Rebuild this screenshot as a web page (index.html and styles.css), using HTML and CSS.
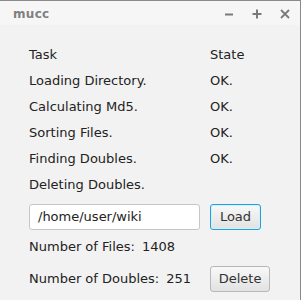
FILE: index.html
```html
<!DOCTYPE html>
<html>
<head>
<meta charset="utf-8">
<link rel="stylesheet" href="styles.css">
</head>
<body>
<div class="window">
  <div class="titlebar">
    <span class="title">mucc</span>
    <div class="controls">
      <svg class="ctl" width="10" height="10" viewBox="0 0 10 10"><path d="M1 5.5H9" stroke="#7a7a7a" stroke-width="2"/></svg>
      <svg class="ctl" width="10" height="10" viewBox="0 0 10 10"><path d="M0.5 5H9.5M5 0.5V9.5" stroke="#7a7a7a" stroke-width="2"/></svg>
      <svg class="ctl" width="10" height="10" viewBox="0 0 10 10"><path d="M1 1L9 9M9 1L1 9" stroke="#7a7a7a" stroke-width="1.8"/></svg>
    </div>
  </div>
  <div class="content">
    <div class="tasks">
      <div>Task</div><div>State</div>
      <div>Loading Directory.</div><div>OK.</div>
      <div>Calculating Md5.</div><div>OK.</div>
      <div>Sorting Files.</div><div>OK.</div>
      <div>Finding Doubles.</div><div>OK.</div>
      <div>Deleting Doubles.</div><div></div>
    </div>
    <div class="pathrow">
      <div class="field">/home/user/wiki</div>
      <div class="btn focused">Load</div>
    </div>
    <div class="inforow">
      <span>Number of Files:</span><span>1408</span>
    </div>
    <div class="inforow last">
      <span>Number of Doubles:</span><span>251</span>
      <div class="btn del">Delete</div>
    </div>
  </div>
</div>
</body>
</html>
```
FILE: styles.css
```css
html, body {
  margin: 0;
  padding: 0;
  background: #f2f2f2;
}
.window {
  width: 301px;
  height: 300px;
  box-sizing: border-box;
  border-top: 1px solid #8a8a8a;
  border-right: 1px solid #8a8a8a;
  background: #f2f2f2;
  font-family: "DejaVu Sans", sans-serif;
  font-size: 13px;
  color: #222;
  overflow: hidden;
}
.titlebar {
  height: 24px;
  background: #f6f6f6;
  display: flex;
  align-items: center;
  justify-content: space-between;
  padding: 0 10px 0 13px;
}
.title {
  font-weight: bold;
  font-size: 12px;
  color: #808080;
  letter-spacing: 0.3px;
  margin-top: 1px;
}
.controls {
  display: flex;
  gap: 18px;
  align-items: center;
  margin-top: 2px;
}
.ctl {
  display: block;
}
.content {
  padding: 17px 0 0 29px;
}
.tasks {
  display: grid;
  grid-template-columns: 181px auto;
  line-height: 26px;
}
.pathrow {
  display: flex;
  margin-top: 6px;
  gap: 10px;
}
.field {
  width: 171px;
  height: 26px;
  box-sizing: border-box;
  background: #fff;
  border: 1px solid #c6c6c6;
  border-radius: 3px;
  padding-left: 8px;
  line-height: 24px;
  color: #222;
}
.btn {
  height: 26px;
  box-sizing: border-box;
  border: 1px solid #b8b8b8;
  border-radius: 3px;
  background: linear-gradient(#f8f8f8, #e2e2e2);
  line-height: 24px;
  text-align: center;
  color: #333;
}
.btn.focused {
  width: 51px;
  border: 1px solid #1fa2d9;
  box-shadow: inset 0 0 0 1px #d8eef8;
}
.inforow {
  display: flex;
  align-items: center;
  gap: 7px;
  line-height: 26px;
  margin-top: 4px;
}
.inforow.last {
  margin-top: 6px;
}
.btn.del {
  width: 60px;
  margin-left: 12px;
  line-height: 24px;
}
```
